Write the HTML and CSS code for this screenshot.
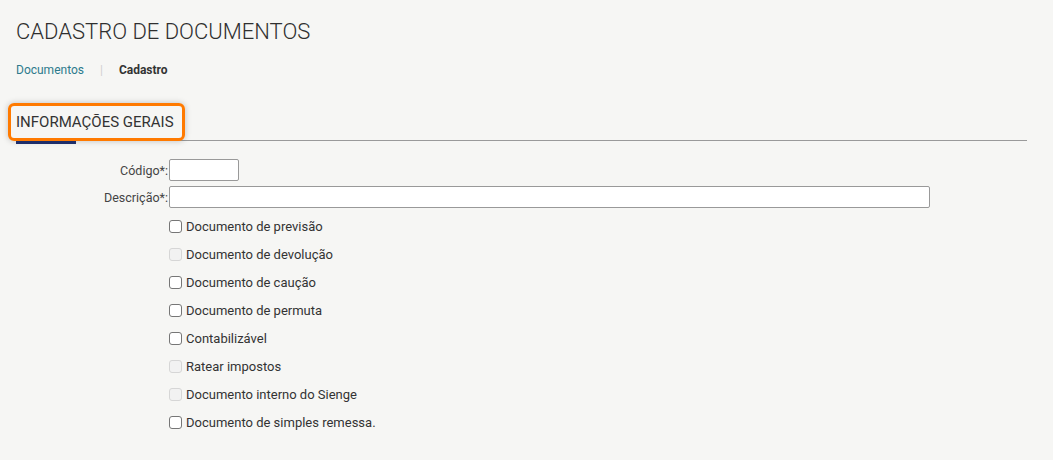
FILE: index.html
```html
<!DOCTYPE html>
<html lang="pt-BR">
<head>
<meta charset="utf-8">
<title>Cadastro de Documentos</title>
<link rel="stylesheet" href="styles.css">
</head>
<body>
<div class="page">
  <h1 class="title">CADASTRO DE DOCUMENTOS</h1>
  <nav class="crumbs">
    <a class="crumb-link" href="#">Documentos</a>
    <span class="crumb-sep">|</span>
    <span class="crumb-current">Cadastro</span>
  </nav>
  <div class="tabs">
    <div class="tab">
      <span class="tab-label">INFORMAÇÕES GERAIS</span>
      <span class="tab-bar"></span>
    </div>
  </div>
  <form class="form">
    <div class="row">
      <label class="label">Código*:</label>
      <input class="input input-code" type="text">
    </div>
    <div class="row">
      <label class="label">Descrição*:</label>
      <input class="input input-desc" type="text">
    </div>
    <div class="checks">
      <label class="check"><span class="box"></span>Documento de previsão</label>
      <label class="check"><span class="box disabled"></span>Documento de devolução</label>
      <label class="check"><span class="box"></span>Documento de caução</label>
      <label class="check"><span class="box"></span>Documento de permuta</label>
      <label class="check"><span class="box"></span>Contabilizável</label>
      <label class="check"><span class="box disabled"></span>Ratear impostos</label>
      <label class="check"><span class="box disabled"></span>Documento interno do Sienge</label>
      <label class="check"><span class="box"></span>Documento de simples remessa.</label>
    </div>
  </form>
</div>
</body>
</html>
```

FILE: styles.css
```css
* { box-sizing: border-box; }
html, body { margin: 0; padding: 0; }
body {
  background: #f6f6f4;
  font-family: Roboto, "Liberation Sans", sans-serif;
  color: #333;
}
.page {
  padding: 18px 26px 0 16px;
}
.title {
  margin: 0;
  font-weight: 300;
  font-size: 22px;
  line-height: 28px;
  color: #2f2f2f;
}
.crumbs {
  display: flex;
  align-items: center;
  margin-top: 16px;
  font-size: 12px;
  line-height: 16px;
}
.crumb-link {
  color: #2d7a8c;
  text-decoration: none;
}
.crumb-sep {
  color: #d0d0d0;
  margin: 0 16px 0 16px;
}
.crumb-current {
  font-weight: 700;
  color: #333;
}
.tabs {
  margin-top: 25px;
  border-bottom: 1px solid #9a9a9a;
  height: 38px;
  display: flex;
}
.tab {
  position: relative;
  margin-left: -8px;
  height: 38px;
  width: 177px;
  border: 3px solid #ff7a00;
  border-radius: 6px;
  box-shadow: 0 0 6px rgba(0,0,0,0.22);
  display: flex;
  align-items: center;
  padding-left: 5px;
}
.tab-label {
  font-size: 15px;
  font-weight: 400;
  color: #333;
  line-height: 18px;
}
.tab-bar {
  position: absolute;
  left: 5px;
  top: 35px;
  width: 60px;
  height: 3px;
  background: #1f2f6b;
}
.form {
  padding-top: 18px;
}
.row {
  display: flex;
  align-items: center;
  margin-bottom: 5px;
}
.label {
  width: 153px;
  text-align: right;
  font-size: 12.5px;
  color: #444;
  padding-right: 1px;
}
.input {
  height: 22px;
  border: 1px solid #999;
  border-radius: 2px;
  background: #fff;
  font: inherit;
  padding: 0 4px;
}
.input-code { width: 70px; }
.input-desc { width: 761px; }
.checks {
  display: flex;
  flex-direction: column;
  padding-left: 153px;
  margin-top: -1px;
}
.check {
  display: flex;
  align-items: center;
  height: 28px;
  font-size: 13px;
  color: #333;
}
.box {
  width: 13px;
  height: 13px;
  border: 1px solid #767676;
  border-radius: 3px;
  background: #fff;
  margin-right: 4px;
}
.box.disabled {
  border-color: #d6d6d6;
  background: #f2f2f2;
}
```
